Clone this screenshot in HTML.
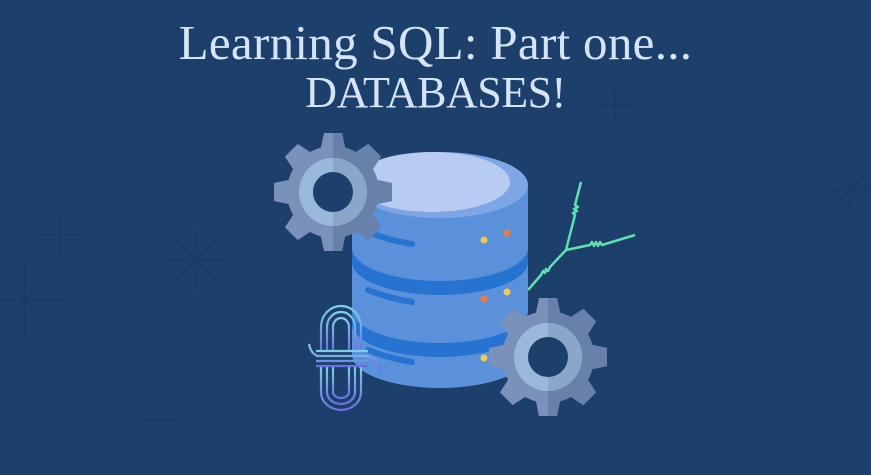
<!DOCTYPE html>
<html><head><meta charset="utf-8"><style>
html,body{margin:0;padding:0}
body{width:871px;height:475px;background:#1d3f6b;overflow:hidden;position:relative;font-family:"Liberation Serif",serif}
h1{position:absolute;top:19px;left:0;width:871px;margin:0;text-align:center;font-weight:normal;font-size:49px;line-height:48px;color:#d5e4f6;letter-spacing:0.3px}
h1 span{font-size:44px;letter-spacing:-0.5px}
svg{position:absolute;left:0;top:0}
</style></head><body>
<svg width="871" height="475" viewBox="0 0 871 475">
<defs>
<g id="gear">
<circle r="46"/>
<g>
<path d="M-13 -40 L-9 -59 H9 L13 -40Z"/>
<path d="M-13 -40 L-9 -59 H9 L13 -40Z" transform="rotate(45)"/>
<path d="M-13 -40 L-9 -59 H9 L13 -40Z" transform="rotate(90)"/>
<path d="M-13 -40 L-9 -59 H9 L13 -40Z" transform="rotate(135)"/>
<path d="M-13 -40 L-9 -59 H9 L13 -40Z" transform="rotate(180)"/>
<path d="M-13 -40 L-9 -59 H9 L13 -40Z" transform="rotate(225)"/>
<path d="M-13 -40 L-9 -59 H9 L13 -40Z" transform="rotate(270)"/>
<path d="M-13 -40 L-9 -59 H9 L13 -40Z" transform="rotate(315)"/>
</g>
</g>
<clipPath id="rh"><rect x="0" y="-70" width="70" height="140"/></clipPath>
<linearGradient id="rope" x1="0" y1="0" x2="0" y2="1"><stop offset="0" stop-color="#7fd0e6"/><stop offset="1" stop-color="#6a6fe0"/></linearGradient>
</defs>
<g stroke="#1a3a66" stroke-width="2" fill="none">
<path d="M25 260v80M-15 300h80M5 280l40 40M45 280l-40 40"/>
<path d="M195 230v60M165 260h60M175 240l40 40M215 240l-40 40"/>
<path d="M60 215v40M40 235h40"/>
<path d="M160 400v40M140 420h40"/>
<path d="M850 170v40M830 190h40M835 175l30 30M865 175l-30 30"/>
<path d="M615 90v30M600 105h30"/>
<path d="M40 95v30M25 110h30"/>
</g>
<path d="M352 185 v170 a88 33 0 0 0 176 0 v-170 z" fill="#5b90da"/>
<path d="M352 248 a88 33 0 0 0 176 0 v14 a88 33 0 0 1 -176 0z" fill="#2673d2"/>
<path d="M352 310 a88 33 0 0 0 176 0 v14 a88 33 0 0 1 -176 0z" fill="#2673d2"/>
<ellipse cx="440" cy="185" rx="88" ry="33" fill="#7ea6e6"/>
<ellipse cx="432" cy="182" rx="78" ry="30" fill="#b8cbf1"/>
<g stroke="#2673d2" stroke-width="6" stroke-linecap="round" fill="none">
<path d="M368 232 q20 8 44 12"/>
<path d="M368 290 q20 8 44 12"/>
<path d="M368 350 q20 8 44 12"/>
</g>
<circle cx="484" cy="240" r="3.5" fill="#f2c94c"/><circle cx="507" cy="233" r="3.5" fill="#ef7a3a"/>
<circle cx="484" cy="299" r="3.5" fill="#ef7a3a"/><circle cx="507" cy="292" r="3.5" fill="#f2c94c"/>
<circle cx="484" cy="358" r="3.5" fill="#f2c94c"/>
<path d="M581 182 L575 205 l3 2 l-4 2 l3 2 l-4 2 l2 2 L566 250 L590 245 l2 -3 l2 4 l2 -4 l2 4 l2 -4 l2 3 L635 235 M566 250 L550 267 l-2 4 l-2 -2 l-1 4 l-2 -2 l-2 4 L528 290" stroke="#5fe0b0" stroke-width="2.5" fill="none" stroke-linejoin="round"/>
<g transform="translate(333,192)">
<use href="#gear" fill="#7a92ba"/>
<g clip-path="url(#rh)"><use href="#gear" fill="#6881aa"/></g>
<circle r="34" fill="#9ab9da"/>
<circle r="34" fill="#8aa7c9" clip-path="url(#rh)"/>
<circle r="20" fill="#1d3f6b"/>
</g>
<g transform="translate(548,357)">
<use href="#gear" fill="#7a92ba"/>
<g clip-path="url(#rh)"><use href="#gear" fill="#6881aa"/></g>
<circle r="34" fill="#9ab9da"/>
<circle r="34" fill="#8aa7c9" clip-path="url(#rh)"/>
<circle r="20" fill="#1d3f6b"/>
</g>
<g stroke="url(#rope)" stroke-width="2.2" fill="none">
<path d="M321 352 v-25 a20 21 0 0 1 40 0 v25"/>
<path d="M327 352 v-25 a14 15 0 0 1 28 0 v25"/>
<path d="M333 352 v-25 a8 9 0 0 1 16 0 v25"/>
<path d="M321 366 v26 a20 18 0 0 0 40 0 v-26"/>
<path d="M327 366 v26 a14 12 0 0 0 28 0 v-26"/>
<path d="M333 366 v26 a8 6 0 0 0 16 0 v-26"/>
<path d="M316 351 h52 M316 356 h52 M316 361 h52 M316 366 h52"/>
<path d="M309 344 q2 10 9 12 M368 356 q10 2 12 14"/>
</g>
</svg>
<h1>Learning SQL: Part one...<br><span>DATABASES!</span></h1>
</body></html>
